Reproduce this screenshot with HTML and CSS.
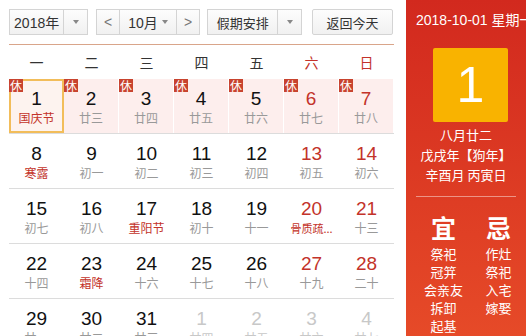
FILE: index.html
```html
<!DOCTYPE html>
<html lang="zh">
<head>
  <meta charset="utf-8">
  <title>万年历</title>
  <link rel="stylesheet" href="styles.css">
</head>
<body>
  <div class="wrap">
    <div class="main">
      <div class="toolbar">
        <div class="sel sel-year"><span class="val">2018年</span><span class="arr"><i></i></span></div>
        <div class="sel sel-month"><span class="nav">&lt;</span><span class="val">10月 <i></i></span><span class="nav">&gt;</span></div>
        <div class="sel sel-hol"><span class="val">假期安排</span><span class="arr"><i></i></span></div>
        <div class="btn">返回今天</div>
      </div>

      <div class="week">
        <span>一</span><span>二</span><span>三</span><span>四</span><span>五</span><span class="we">六</span><span class="we">日</span>
      </div>

      <div class="days">
        <div class="row hol">
          <div class="day today"><b class="rest">休</b><div class="n">1</div><div class="l fest">国庆节</div></div>
          <div class="day"><b class="rest">休</b><div class="n">2</div><div class="l">廿三</div></div>
          <div class="day"><b class="rest">休</b><div class="n">3</div><div class="l">廿四</div></div>
          <div class="day"><b class="rest">休</b><div class="n">4</div><div class="l">廿五</div></div>
          <div class="day"><b class="rest">休</b><div class="n">5</div><div class="l">廿六</div></div>
          <div class="day we"><b class="rest">休</b><div class="n">6</div><div class="l">廿七</div></div>
          <div class="day we"><b class="rest">休</b><div class="n">7</div><div class="l">廿八</div></div>
        </div>
        <div class="row">
          <div class="day"><div class="n">8</div><div class="l fest">寒露</div></div>
          <div class="day"><div class="n">9</div><div class="l">初一</div></div>
          <div class="day"><div class="n">10</div><div class="l">初二</div></div>
          <div class="day"><div class="n">11</div><div class="l">初三</div></div>
          <div class="day"><div class="n">12</div><div class="l">初四</div></div>
          <div class="day we"><div class="n">13</div><div class="l">初五</div></div>
          <div class="day we"><div class="n">14</div><div class="l">初六</div></div>
        </div>
        <div class="row">
          <div class="day"><div class="n">15</div><div class="l">初七</div></div>
          <div class="day"><div class="n">16</div><div class="l">初八</div></div>
          <div class="day"><div class="n">17</div><div class="l fest">重阳节</div></div>
          <div class="day"><div class="n">18</div><div class="l">初十</div></div>
          <div class="day"><div class="n">19</div><div class="l">十一</div></div>
          <div class="day we"><div class="n">20</div><div class="l fest small">骨质疏...</div></div>
          <div class="day we"><div class="n">21</div><div class="l">十三</div></div>
        </div>
        <div class="row">
          <div class="day"><div class="n">22</div><div class="l">十四</div></div>
          <div class="day"><div class="n">23</div><div class="l fest">霜降</div></div>
          <div class="day"><div class="n">24</div><div class="l">十六</div></div>
          <div class="day"><div class="n">25</div><div class="l">十七</div></div>
          <div class="day"><div class="n">26</div><div class="l">十八</div></div>
          <div class="day we"><div class="n">27</div><div class="l">十九</div></div>
          <div class="day we"><div class="n">28</div><div class="l">二十</div></div>
        </div>
        <div class="row">
          <div class="day"><div class="n">29</div><div class="l">廿一</div></div>
          <div class="day"><div class="n">30</div><div class="l">廿二</div></div>
          <div class="day"><div class="n">31</div><div class="l">廿三</div></div>
          <div class="day other"><div class="n">1</div><div class="l">廿四</div></div>
          <div class="day other"><div class="n">2</div><div class="l">廿五</div></div>
          <div class="day other"><div class="n">3</div><div class="l">廿六</div></div>
          <div class="day other"><div class="n">4</div><div class="l">廿七</div></div>
        </div>
      </div>
    </div>

    <div class="side">
      <div class="date">2018-10-01 星期一</div>
      <div class="big">1</div>
      <div class="lunar">
        <p>八月廿二</p>
        <p>戊戌年【狗年】</p>
        <p>辛酉月 丙寅日</p>
      </div>
      <div class="yiji">
        <div class="col">
          <h3>宜</h3>
          <p>祭祀</p><p>冠笄</p><p>会亲友</p><p>拆卸</p><p>起基</p>
        </div>
        <div class="col">
          <h3>忌</h3>
          <p>作灶</p><p>祭祀</p><p>入宅</p><p>嫁娶</p>
        </div>
      </div>
    </div>
  </div>
</body>
</html>
```

FILE: styles.css
```css
html, body {
  margin: 0;
  padding: 0;
}
body {
  font-family: "Liberation Sans", Arial, "Noto Sans CJK SC", sans-serif;
  background: #fff;
  color: #333;
  overflow: hidden;
}
.wrap {
  display: flex;
  width: 526px;
  height: 336px;
  overflow: hidden;
}
.main {
  width: 385px;
  padding: 9px 12px 0 9px;
}

/* toolbar */
.toolbar {
  display: flex;
  height: 26px;
  padding-bottom: 9px;
  border-bottom: 1px solid #d9a58a;
}
.sel, .btn {
  display: flex;
  box-sizing: border-box;
  height: 26px;
  border: 1px solid #d4d4d4;
  background: linear-gradient(#fdfdfd, #f1f1f1);
  font-size: 13px;
  color: #333;
  font-family: "Liberation Sans", "Noto Sans CJK SC", sans-serif;
}
.sel span {
  display: flex;
  align-items: center;
  justify-content: center;
}
.sel .arr {
  border-left: 1px solid #d4d4d4;
  width: 23px;
}
.sel i {
  display: inline-block;
  width: 0;
  height: 0;
  border-left: 3px solid transparent;
  border-right: 3px solid transparent;
  border-top: 4px solid #888;
  margin-left: 4px;
}
.sel .arr i {
  margin-left: 0;
}
.sel-year {
  width: 79px;
}
.sel-year .val {
  width: 54px;
  font-size: 14px;
}
.sel-month {
  width: 104px;
  margin-left: 8px;
}
.sel-month .nav {
  width: 22px;
  color: #777;
  font-size: 14px;
}
.sel-month .val {
  flex: 1;
  font-size: 14px;
  border-left: 1px solid #d4d4d4;
  border-right: 1px solid #d4d4d4;
}
.sel-hol {
  width: 95px;
  margin-left: 7px;
}
.sel-hol .val {
  width: 71px;
}
.btn {
  width: 81px;
  margin-left: 10px;
  align-items: center;
  justify-content: center;
  border-radius: 2px;
}

/* week header */
.week {
  display: flex;
  height: 34px;
  align-items: center;
  font-family: "Noto Sans CJK SC", sans-serif;
  font-size: 14px;
  color: #333;
}
.week span {
  width: 55px;
  text-align: center;
}
.week .we {
  color: #c3332a;
}

/* days */
.row {
  display: flex;
  height: 54px;
  border-bottom: 1px solid #dcdcdc;
}
.day {
  position: relative;
  width: 55px;
  box-sizing: border-box;
  padding-top: 9px;
  text-align: center;
}
.hol .day {
  background: #fdeeed;
  border-right: 1px solid #fff;
}
.hol .day.today {
  background: #fdf3ef;
  border: 2px solid #f2bd5a;
  padding-top: 7px;
}
.rest {
  position: absolute;
  left: 0;
  top: 0;
  width: 14px;
  height: 13px;
  line-height: 13px;
  background: #c8432e;
  color: #fff;
  font-weight: normal;
  font-size: 12px;
  font-family: "Noto Sans CJK SC", sans-serif;
}
.today .rest {
  left: -2px;
  top: -2px;
}
.n {
  font-size: 19px;
  line-height: 22px;
  color: #111;
}
.l {
  font-size: 12px;
  line-height: 16px;
  color: #999;
  font-family: "Noto Sans CJK SC", sans-serif;
}
.l.fest {
  color: #c3332a;
}
.l.small {
  font-size: 11px;
  white-space: nowrap;
}
.we .n {
  color: #c3332a;
}
.other .n, .other .l {
  color: #c8c8c8;
}

/* side panel */
.side {
  flex: 1;
  background: linear-gradient(#d2291e, #e64a28);
  color: #fff;
  font-family: "Noto Sans CJK SC", sans-serif;
  white-space: nowrap;
  overflow: hidden;
}
.date {
  font-family: "Liberation Sans", "Noto Sans CJK SC", sans-serif;
  font-size: 14px;
  line-height: 20px;
  padding: 10px 0 0 10px;
}
.big {
  width: 75px;
  height: 74px;
  margin: 18px 0 0 27px;
  background: #f9b300;
  border-radius: 2px;
  text-align: center;
  font-family: "Liberation Sans", sans-serif;
  font-size: 50px;
  line-height: 74px;
}
.lunar {
  margin: 3px 10px 0 10px;
  padding-bottom: 11px;
  border-bottom: 1px solid rgba(255, 255, 255, 0.45);
  text-align: center;
  font-size: 13px;
}
.lunar p {
  margin: 0;
  line-height: 20px;
}
.yiji {
  display: flex;
  padding-left: 10px;
  margin-top: 16px;
}
.col {
  width: 55px;
  text-align: center;
}
.col h3 {
  margin: 0 0 4px;
  font-size: 25px;
  line-height: 28px;
  font-weight: bold;
}
.col p {
  margin: 0;
  font-size: 13px;
  line-height: 18px;
}
```
